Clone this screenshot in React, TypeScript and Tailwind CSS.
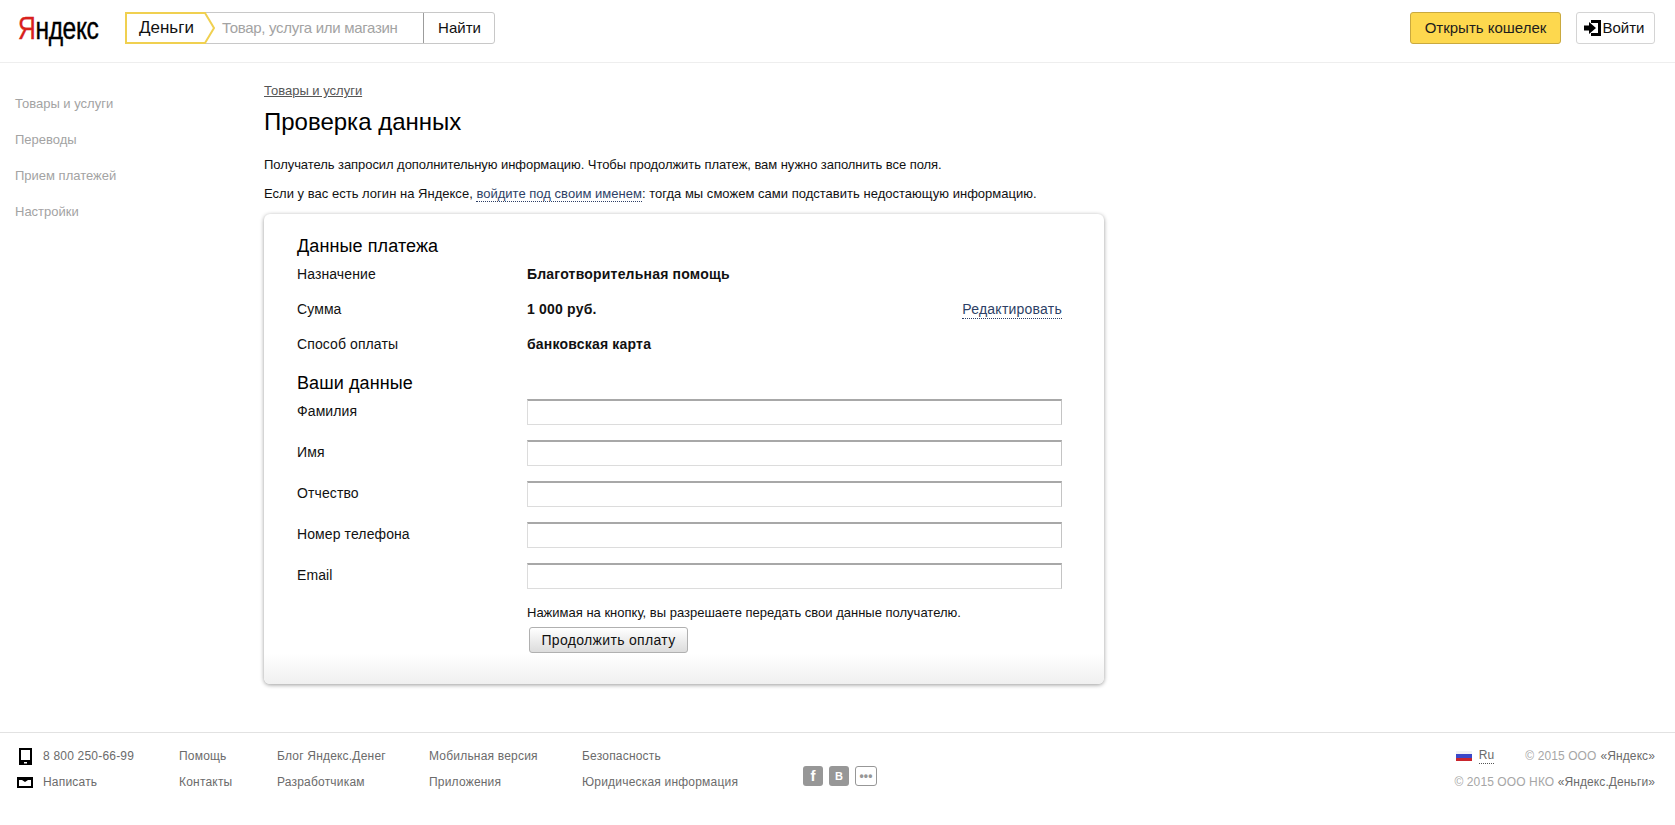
const font = { fontFamily: '"Liberation Sans", Arial, sans-serif' }

const sideItems = ["Товары и услуги", "Переводы", "Прием платежей", "Настройки"]
const paymentRows = [
  { label: "Назначение", value: "Благотворительная помощь" },
  { label: "Сумма", value: "1 000 руб." },
  { label: "Способ оплаты", value: "банковская карта" },
]
const fields = ["Фамилия", "Имя", "Отчество", "Номер телефона", "Email"]
const footerCols = [
  { width: "w-[98px]", links: ["Помощь", "Контакты"] },
  { width: "w-[152px]", links: ["Блог Яндекс.Денег", "Разработчикам"] },
  { width: "w-[153px]", links: ["Мобильная версия", "Приложения"] },
  { width: "w-[221px]", links: ["Безопасность", "Юридическая информация"] },
]

function Header() {
  return (
    <header className="flex h-[63px] items-start border-b border-[#eeeeee] pt-[12px] pl-[18px] pr-[20px]">
      <a className="flex h-[32px] w-[107px] items-center text-[32px] leading-[32px] tracking-[-.5px] text-black origin-left scale-x-[.77] whitespace-nowrap [-webkit-text-stroke:.4px_currentColor]">
        <span className="text-[#d8211c]">Я</span>ндекс
      </a>
      <div className="flex h-[32px] w-[370px] rounded-[3px] border border-[#c8c8c8] text-[15px] leading-[30px]">
        <div className="relative w-[88px] shrink-0">
          <svg className="absolute -left-px -top-px" width="91" height="32" viewBox="0 0 91 32">
            <path d="M1 1H80L89 16L80 31H1Z" fill="#fff" stroke="#f0d050" strokeWidth="2" />
          </svg>
          <span className="absolute left-[13px] top-0 text-[17px] text-[#111]">Деньги</span>
        </div>
        <div className="flex-1 pl-[8px] text-[#a3a3a3] tracking-[-.3px]">Товар, услуга или магазин</div>
        <div className="w-[71px] shrink-0 border-l border-[#9c9c9c] pl-[1px] text-center text-[#111]">Найти</div>
      </div>
      <div className="flex-1" />
      <button className="h-[32px] w-[151px] rounded-[3px] border border-[#c9a93f] bg-[#fdd84e] text-[15px] text-[#1d1d1d]">
        Открыть кошелек
      </button>
      <button className="ml-[15px] flex h-[32px] w-[79px] items-center justify-center gap-[2px] rounded-[3px] border border-[#d4d4d4] bg-white pr-[3px] text-[15px] text-[#111]">
        <svg width="17" height="16" viewBox="0 0 17 16">
          <path d="M7 0H17V16H7V13H14V3H7Z" fill="#000" />
          <path d="M0 5.5H5V2L12 8L5 14V10.5H0Z" fill="#000" />
        </svg>
        Войти
      </button>
    </header>
  )
}

function Sidebar() {
  return (
    <nav className="w-[264px] shrink-0 pl-[15px] pt-[32px] text-[13px] leading-[18px] text-[#a3a3a3]">
      {sideItems.map(item => (
        <div key={item} className="mb-[18px]">{item}</div>
      ))}
    </nav>
  )
}

function Card() {
  return (
    <section className="h-[470px] w-[840px] rounded-[6px] bg-white shadow-[0_1px_4px_rgba(0,0,0,.4)]">
      <div className="h-[439px] pl-[33px] pr-[42px] pt-[22px]">
        <h2 className="text-[18px] leading-[20px] tracking-[.1px] text-black">Данные платежа</h2>
        <div className="relative mt-[1px]">
          {paymentRows.map(row => (
            <div key={row.label} className="flex h-[35px] text-[14px] leading-[35px] tracking-[.1px] text-[#111]">
              <div className="w-[230px]">{row.label}</div>
              <div className="text-[14px] font-bold tracking-[.2px]">{row.value}</div>
            </div>
          ))}
          <a className="absolute right-0 top-[35px] mt-[8px] border-b border-dotted border-[#2d3f66] text-[14px] leading-[18px] tracking-[.23px] text-[#2d3f66]">
            Редактировать
          </a>
        </div>
        <h2 className="mt-[11px] text-[18px] leading-[20px] tracking-[.1px] text-black">Ваши данные</h2>
        <div className="mt-[6px]">
          {fields.map(field => (
            <div key={field} className="flex h-[41px] text-[14px] leading-[24px] tracking-[.1px] text-[#111]">
              <label className="w-[230px]">{field}</label>
              <input className="h-[26px] w-[535px] border border-[#dcdcdc] border-t-[#a8a8a8] border-r-[#c4c4c4] border-t-2 bg-white outline-none" />
            </div>
          ))}
        </div>
        <p className="ml-[230px] text-[13px] leading-[18px] text-[#111]">
          Нажимая на кнопку, вы разрешаете передать свои данные получателю.
        </p>
        <button className="ml-[232px] mt-[5px] h-[26px] w-[159px] rounded-[3px] border border-[#b0b0b0] bg-gradient-to-b from-[#ffffff] to-[#dcdcdc] text-[14px] leading-[22px] text-[#111] tracking-[.33px]">
          Продолжить оплату
        </button>
      </div>
      <div className="h-[31px] rounded-b-[6px] bg-gradient-to-b from-white to-[#f0f0f0]" />
    </section>
  )
}

function Main() {
  return (
    <main className="flex-1">
      <a className="mt-[21px] block text-[13px] leading-[13px] text-[#555] underline">Товары и услуги</a>
      <h1 className="mt-[11px] text-[24px] leading-[28px] text-black">Проверка данных</h1>
      <p className="mt-[20px] text-[13px] leading-[18px] tracking-[-.06px] text-[#111]">
        Получатель запросил дополнительную информацию. Чтобы продолжить платеж, вам нужно заполнить все поля.
      </p>
      <p className="mt-[11px] text-[13px] leading-[18px] tracking-[.02px] text-[#111]">
        Если у вас есть логин на Яндексе,{" "}
        <a className="border-b border-dotted border-[#2d3f66] text-[#2d3f66]">войдите под своим именем</a>: тогда мы сможем сами подставить недостающую информацию.
      </p>
      <div className="mt-[11px] mb-[48px]">
        <Card />
      </div>
    </main>
  )
}

function Footer() {
  return (
    <footer className="flex h-[93px] border-t border-[#e2e2e2] pl-[18px] pr-[20px] pt-[13px] text-[12px] leading-[20px] tracking-[.2px] text-[#6b6b6b]">
      <div className="w-[161px] shrink-0">
        <div className="mb-[6px] flex items-center">
          <svg width="13" height="17" viewBox="0 0 13 17" className="ml-px mr-[11px]">
            <path fillRule="evenodd" d="M0 0H13V17H0ZM2 2V12H11V2ZM5 14V15.5H8V14Z" fill="#000" />
          </svg>
          8 800 250-66-99
        </div>
        <div className="flex items-center">
          <svg width="16" height="11" viewBox="0 0 16 11" className="-ml-px mr-[10px]">
            <path fillRule="evenodd" d="M0 0H16V11H0ZM2 3V9H14V3H11L8 5L5 3Z" fill="#000" />
          </svg>
          Написать
        </div>
      </div>
      {footerCols.map(col => (
        <div key={col.links[0]} className={`${col.width} shrink-0`}>
          <div className="mb-[6px]">{col.links[0]}</div>
          <div>{col.links[1]}</div>
        </div>
      ))}
      <div className="mt-[20px] flex h-[20px] gap-[6px]">
        <span className="flex h-[20px] w-[20px] items-center justify-center rounded-[3px] bg-[#979797] text-[15px] font-bold text-white">f</span>
        <span className="flex h-[20px] w-[20px] items-center justify-center rounded-[3px] bg-[#979797] text-[11px] font-bold text-white">В</span>
        <span className="flex h-[20px] w-[22px] items-center justify-center rounded-[3px] border border-[#979797] pb-[1px] text-[12px] font-bold leading-none text-[#979797]">•••</span>
      </div>
      <div className="flex-1 text-right tracking-[.1px] text-[#a6a6a6]">
        <div className="mb-[6px] flex items-center justify-end">
          <div className="mr-[7px] flex h-[10px] w-[16px] flex-col">
            <div className="h-[3px] bg-[#f2f2f5]" />
            <div className="h-[4px] bg-[#3b47c8]" />
            <div className="h-[3px] bg-[#c9252d]" />
          </div>
          <span className="mr-[31px] border-b border-dotted border-[#555] leading-[15px] text-[#6b6b6b]">Ru</span>
          © 2015 ООО <span className="ml-[4px] text-[#6b6b6b]">«Яндекс»</span>
        </div>
        <div>
          © 2015 ООО НКО <span className="text-[#6b6b6b]">«Яндекс.Деньги»</span>
        </div>
      </div>
    </footer>
  )
}

export default function App() {
  return (
    <div className="min-h-[825px] bg-white" style={font}>
      <Header />
      <div className="flex">
        <Sidebar />
        <Main />
      </div>
      <Footer />
    </div>
  )
}
